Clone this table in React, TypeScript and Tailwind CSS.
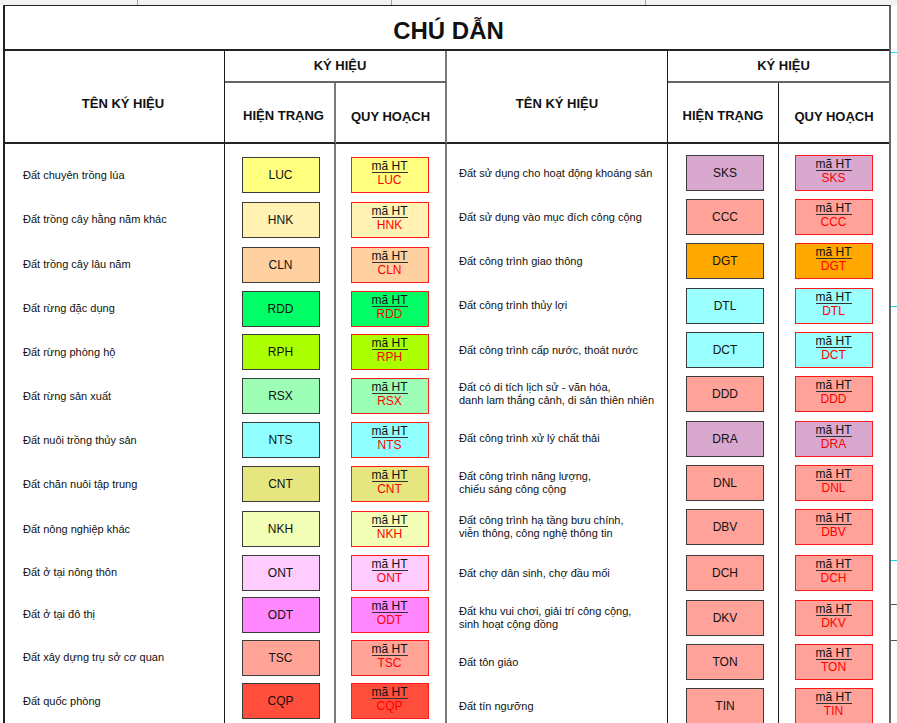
import React from 'react';

type Row = { name: React.ReactNode; code: string; bg: string; h: string };

const leftRows: Row[] = [
  { name: 'Đất chuyên trồng lúa', code: 'LUC', bg: 'bg-[#ffff80]', h: 'h-[44px]' },
  { name: 'Đất trồng cây hằng năm khác', code: 'HNK', bg: 'bg-[#fff2b3]', h: 'h-[45px]' },
  { name: 'Đất trồng cây lâu năm', code: 'CLN', bg: 'bg-[#ffd1a0]', h: 'h-[45px]' },
  { name: 'Đất rừng đặc dụng', code: 'RDD', bg: 'bg-[#00ff66]', h: 'h-[43px]' },
  { name: 'Đất rừng phòng hộ', code: 'RPH', bg: 'bg-[#aaff00]', h: 'h-[44px]' },
  { name: 'Đất rừng sản xuất', code: 'RSX', bg: 'bg-[#9dffb5]', h: 'h-[44px]' },
  { name: 'Đất nuôi trồng thủy sản', code: 'NTS', bg: 'bg-[#8fffff]', h: 'h-[44px]' },
  { name: 'Đất chăn nuôi tập trung', code: 'CNT', bg: 'bg-[#e6e680]', h: 'h-[44px]' },
  { name: 'Đất nông nghiệp khác', code: 'NKH', bg: 'bg-[#f3ffb6]', h: 'h-[46px]' },
  { name: 'Đất ở tại nông thôn', code: 'ONT', bg: 'bg-[#ffccff]', h: 'h-[41px]' },
  { name: 'Đất ở tại đô thị', code: 'ODT', bg: 'bg-[#ff88ff]', h: 'h-[43px]' },
  { name: 'Đất xây dựng trụ sở cơ quan', code: 'TSC', bg: 'bg-[#ffa497]', h: 'h-[43px]' },
  { name: 'Đất quốc phòng', code: 'CQP', bg: 'bg-[#ff4f3c]', h: 'h-[44px]' },
];

const rightRows: Row[] = [
  { name: 'Đất sử dụng cho hoạt động khoáng sản', code: 'SKS', bg: 'bg-[#d8a8cf]', h: 'h-[44px]' },
  { name: 'Đất sử dụng vào mục đích công cộng', code: 'CCC', bg: 'bg-[#ffa39a]', h: 'h-[44px]' },
  { name: 'Đất công trình giao thông', code: 'DGT', bg: 'bg-[#ffa900]', h: 'h-[44px]' },
  { name: 'Đất công trình thủy lợi', code: 'DTL', bg: 'bg-[#99ffff]', h: 'h-[45px]' },
  { name: 'Đất công trình cấp nước, thoát nước', code: 'DCT', bg: 'bg-[#99ffff]', h: 'h-[44px]' },
  {
    name: (
      <>
        Đất có di tích lịch sử - văn hóa,
        <br />
        danh lam thắng cảnh, di sản thiên nhiên
      </>
    ),
    code: 'DDD',
    bg: 'bg-[#ffa39a]',
    h: 'h-[43px]',
  },
  { name: 'Đất công trình xử lý chất thải', code: 'DRA', bg: 'bg-[#d8a8cf]', h: 'h-[47px]' },
  {
    name: (
      <>
        Đất công trình năng lượng,
        <br />
        chiếu sáng công cộng
      </>
    ),
    code: 'DNL',
    bg: 'bg-[#ffa39a]',
    h: 'h-[42px]',
  },
  {
    name: (
      <>
        Đất công trình hạ tầng bưu chính,
        <br />
        viễn thông, công nghệ thông tin
      </>
    ),
    code: 'DBV',
    bg: 'bg-[#ffa39a]',
    h: 'h-[46px]',
  },
  { name: 'Đất chợ dân sinh, chợ đầu mối', code: 'DCH', bg: 'bg-[#ffa39a]', h: 'h-[46px]' },
  {
    name: (
      <>
        Đất khu vui chơi, giải trí công cộng,
        <br />
        sinh hoạt cộng đồng
      </>
    ),
    code: 'DKV',
    bg: 'bg-[#ffa39a]',
    h: 'h-[44px]',
  },
  { name: 'Đất tôn giáo', code: 'TON', bg: 'bg-[#ffa39a]', h: 'h-[44px]' },
  { name: 'Đất tín ngưỡng', code: 'TIN', bg: 'bg-[#ffa39a]', h: 'h-[44px]' },
];

function HTBox({ code, bg }: { code: string; bg: string }) {
  return (
    <div
      className={`w-[78px] h-[36px] shrink-0 ${bg} border-[1.5px] border-[#3c3c3c] flex items-center justify-center text-[12px] text-[#111] leading-none`}
    >
      {code}
    </div>
  );
}

function QHBox({ code, bg }: { code: string; bg: string }) {
  return (
    <div
      className={`w-[78px] h-[36px] shrink-0 ${bg} border-[1.5px] border-[#ff1a1a] flex flex-col items-center pt-[2px] leading-[12px]`}
    >
      <span className="text-[12px] text-[#111] border-b border-[#333] leading-[12px]">mã HT</span>
      <span className="text-[12px] text-[#ff0000] mt-[1px] leading-[12px]">{code}</span>
    </div>
  );
}

function Half({ rows, side }: { rows: Row[]; side: 'left' | 'right' }) {
  const isLeft = side === 'left';
  return (
    <div className="flex">
      <div className={isLeft ? 'w-[220px] border-r border-[#1a1a1a] pt-[9px]' : 'w-[221px] border-r border-[#1a1a1a] pt-[7px]'}>
        {rows.map((r, i) => (
          <div
            key={i}
            className={`${r.h} flex items-center ${isLeft ? 'pl-[18px]' : 'pl-[12px]'} text-[11px] leading-[13px] text-[#111]`}
          >
            <div>{r.name}</div>
          </div>
        ))}
      </div>
      <div
        className={isLeft ? 'w-[111px] border-r-2 border-[#7a7a7a] pt-[9px]' : 'w-[111px] border-r border-[#1a1a1a] pt-[7px]'}
      >
        {rows.map((r, i) => (
          <div key={i} className={`${r.h} flex items-center justify-center ${isLeft ? 'pl-[2px]' : 'pl-[4px]'}`}>
            <HTBox code={r.code} bg={r.bg} />
          </div>
        ))}
      </div>
      <div className={isLeft ? 'w-[111px] border-r-2 border-[#7a7a7a] pt-[9px]' : 'w-[110px] pt-[7px]'}>
        {rows.map((r, i) => (
          <div key={i} className={`${r.h} flex items-center justify-center ${isLeft ? 'pr-[2px]' : 'pr-[1px]'}`}>
            <QHBox code={r.code} bg={r.bg} />
          </div>
        ))}
      </div>
    </div>
  );
}

export default function App() {
  return (
    <div className="relative w-[897px] h-[723px] overflow-hidden bg-white font-['Liberation_Sans',Arial,sans-serif]">
      {/* top strip */}
      <div className="h-[5px] bg-[#f2f2f2]" />
      {/* page marks */}
      <div className="absolute top-0 left-[137px] w-px h-[5px] bg-[#00e0f0]" />
      <div className="absolute top-0 left-[391px] w-px h-[5px] bg-[#00e0f0]" />
      <div className="absolute top-0 left-[645px] w-px h-[5px] bg-[#00e0f0]" />
      <div className="absolute left-[891px] top-[52px] w-[6px] h-px bg-[#00e0f0]" />
      <div className="absolute left-[891px] top-[306px] w-[6px] h-px bg-[#00e0f0]" />
      <div className="absolute left-[891px] top-[560px] w-[6px] h-px bg-[#00e0f0]" />
      <div className="absolute left-[891px] top-[604px] w-[6px] h-px bg-[#555]" />
      <div className="absolute left-[891px] top-[640px] w-[6px] h-px bg-[#555]" />

      <div className="ml-[3px] w-[888px] border-l-2 border-r-2 border-t border-l-[#222] border-r-[#666] border-t-[#222] flex flex-col">
        {/* title */}
        <div className="h-[45px] shrink-0 border-b-2 border-[#222] flex items-center justify-center pt-[6px] pl-[3px]">
          <span className="text-[24px] font-bold text-[#111] leading-none">CHÚ DẪN</span>
        </div>
        {/* header */}
        <div className="shrink-0 grid grid-cols-[220px_111px_111px_221px_111px_110px] grid-rows-[32px_61px] text-[13px] font-bold text-[#111]">
          <div className="col-start-1 row-start-1 row-span-2 border-r border-b-2 border-r-[#1a1a1a] border-b-[#222] flex items-center justify-center pt-[14px] pl-[17px]">
            TÊN KÝ HIỆU
          </div>
          <div className="col-start-2 col-span-2 row-start-1 border-r-2 border-b-2 border-r-[#7a7a7a] border-b-[#666] flex items-center justify-center pl-[10px]">
            KÝ HIỆU
          </div>
          <div className="col-start-4 row-start-1 row-span-2 border-r border-b-2 border-r-[#1a1a1a] border-b-[#222] flex items-center justify-center pt-[14px]">
            TÊN KÝ HIỆU
          </div>
          <div className="col-start-5 col-span-2 row-start-1 border-b-2 border-[#666] flex items-center justify-center pl-[10px]">
            KÝ HIỆU
          </div>
          <div className="col-start-2 row-start-2 border-r-2 border-b-2 border-r-[#7a7a7a] border-b-[#222] flex items-center justify-center pt-[7px] pl-[8px]">
            HIỆN TRẠNG
          </div>
          <div className="col-start-3 row-start-2 border-r-2 border-b-2 border-r-[#7a7a7a] border-b-[#222] flex items-center justify-center pt-[8px]">
            QUY HOẠCH
          </div>
          <div className="col-start-5 row-start-2 border-r border-b-2 border-r-[#1a1a1a] border-b-[#222] flex items-center justify-center pt-[7px]">
            HIỆN TRẠNG
          </div>
          <div className="col-start-6 row-start-2 border-b-2 border-[#222] flex items-center justify-center pt-[8px]">
            QUY HOẠCH
          </div>
        </div>
        {/* body */}
        <div className="flex shrink-0">
          <Half rows={leftRows} side="left" />
          <Half rows={rightRows} side="right" />
        </div>
      </div>
    </div>
  );
}
